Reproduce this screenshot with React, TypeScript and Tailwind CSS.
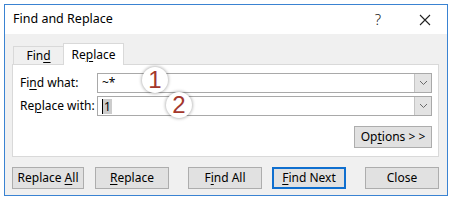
import React from 'react';

const font = { fontFamily: '"Noto Sans", "Open Sans", sans-serif' };

function U({ children }: { children: React.ReactNode }) {
    return <span className="underline underline-offset-2 decoration-1">{children}</span>;
}

function Combo({ children }: { children?: React.ReactNode }) {
    return (
        <div className="flex-1 h-[20px] flex border border-[#a9a9a9] bg-white">
            <div className="flex-1 flex items-center pl-[4px] text-[12px] text-black">{children}</div>
            <div className="w-[17px] flex items-center justify-center bg-[#e3e3e3] border-l border-[#c4c4c4]">
                <svg width="9" height="6" viewBox="0 0 9 6">
                    <path d="M1 1 L4.5 4.5 L8 1" fill="none" stroke="#6a6a6a" strokeWidth="1" />
                </svg>
            </div>
        </div>
    );
}

function Btn({ children, focused }: { children: React.ReactNode; focused?: boolean }) {
    return (
        <div
            className={
                'w-[74px] h-[22px] flex items-center justify-center text-[12px] text-black bg-[#e1e1e1] ' +
                (focused ? 'border-2 border-[#0f6fcf]' : 'border border-[#adadad]')
            }
        >
            {children}
        </div>
    );
}

function Marker({ n, className }: { n: string; className: string }) {
    return (
        <div
            className={
                'absolute w-[26px] h-[26px] rounded-full bg-white shadow-[0_0_3px_1px_rgba(0,0,0,0.25)] flex items-center justify-center text-[24px] leading-none text-[#a3372c] ' +
                className
            }
            style={{ fontFamily: '"Liberation Sans", Arial, sans-serif' }}
        >
            {n}
        </div>
    );
}

export default function App() {
    return (
        <div className="relative w-[452px] h-[205px] bg-white p-[4px] pb-[9px]" style={font}>
            <div className="h-full flex flex-col border border-[#3a83d2]">
                {/* Title bar */}
                <div className="h-[29px] flex items-center bg-white pl-[8px] pr-[16px] shrink-0">
                    <span className="text-[12.5px] text-black flex-1">Find and Replace</span>
                    <span className="text-[15px] text-[#222] mr-[38px] font-light">?</span>
                    <svg width="12" height="12" viewBox="0 0 12 12">
                        <path d="M1 1 L11 11 M11 1 L1 11" stroke="#222" strokeWidth="1.1" />
                    </svg>
                </div>

                {/* Body */}
                <div className="flex-1 bg-[#f0f0f0] pt-[8px] pl-[7px] pr-[8px]">
                    <div className="flex items-end h-[22px] pl-[1px]">
                        <div className="w-[50px] h-[18px] flex items-center justify-center text-[12px] text-black border-t border-l border-[#d9d9d9] bg-[#f0f0f0]">
                            <span>
                                Fin<U>d</U>
                            </span>
                        </div>
                        <div className="w-[61px] h-[22px] flex items-center justify-center text-[12px] text-black border-t border-l border-r border-[#d9d9d9] bg-white -mb-px relative z-10">
                            <span>
                                Re<U>p</U>lace
                            </span>
                        </div>
                    </div>

                    <div className="h-[93px] border border-[#d9d9d9] bg-white pt-[8px] pl-[7px] pr-[6px] flex flex-col">
                        <div className="flex items-center">
                            <span className="w-[77px] text-[12px] text-black">
                                Fi<U>n</U>d what:
                            </span>
                            <Combo>~*</Combo>
                        </div>
                        <div className="flex items-center mt-[3px]">
                            <span className="w-[77px] text-[12px] text-black">
                                Re<U>p</U>lace with:
                            </span>
                            <Combo>
                                <span className="border-l border-black bg-[#cccccc] px-[1px] leading-[15px]">1</span>
                            </Combo>
                        </div>
                        <div className="flex justify-end mt-[10px]">
                            <div className="w-[78px] h-[22px] flex items-center justify-center text-[12px] text-black bg-[#e1e1e1] border border-[#adadad]">
                                <span>
                                    Op<U>t</U>ions &gt; &gt;
                                </span>
                            </div>
                        </div>
                    </div>

                    <div className="flex mt-[10px]">
                        <Btn>
                            <span>
                                Replace <U>A</U>ll
                            </span>
                        </Btn>
                        <div className="ml-[11px]">
                            <Btn>
                                <U>R</U>eplace
                            </Btn>
                        </div>
                        <div className="ml-[19px]">
                            <Btn>
                                <span>
                                    F<U>i</U>nd All
                                </span>
                            </Btn>
                        </div>
                        <div className="ml-[10px]">
                            <Btn focused>
                                <span>
                                    <U>F</U>ind Next
                                </span>
                            </Btn>
                        </div>
                        <div className="ml-[19px]">
                            <Btn>Close</Btn>
                        </div>
                    </div>
                </div>
            </div>

            <Marker n="1" className="left-[142px] top-[67px]" />
            <Marker n="2" className="left-[166px] top-[92px]" />
        </div>
    );
}
